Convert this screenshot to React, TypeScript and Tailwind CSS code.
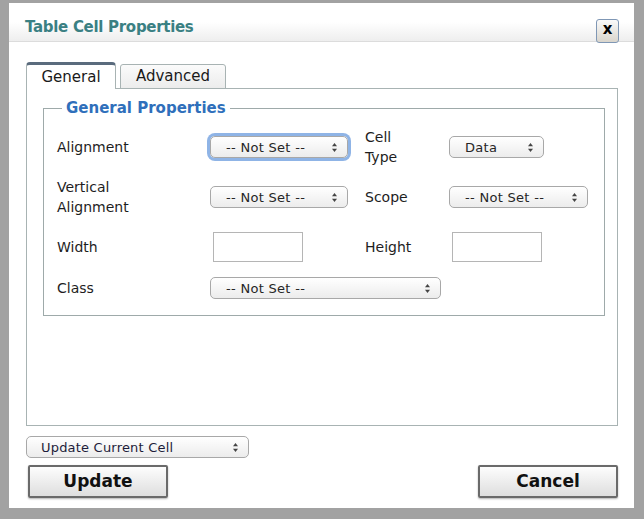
import React from "react";

const font = { fontFamily: '"DejaVu Sans", Verdana, sans-serif' };

function Arrows() {
  return (
    <svg width="7" height="11" viewBox="0 0 7 11" className="shrink-0">
      <path d="M3.5 1 L6 4.2 L1 4.2 Z" fill="#444" />
      <path d="M3.5 10 L6 6.8 L1 6.8 Z" fill="#444" />
    </svg>
  );
}

function FakeSelect({
  value,
  width,
  focused = false,
}: {
  value: string;
  width: string;
  focused?: boolean;
}) {
  return (
    <div
      className={`${width} h-[22px] flex items-center justify-between pl-[15px] pr-[9px] rounded-[5px] border border-[#a8a8a8] bg-gradient-to-b from-white to-[#ececec] text-[13px] tracking-[0.3px] text-[#262626] ${
        focused ? "ring-[3px] ring-[#8fb4e6] border-[#7c9cc8]" : ""
      }`}
    >
      <span className="leading-none whitespace-pre">{value}</span>
      <Arrows />
    </div>
  );
}

function TextBox() {
  return <div className="ml-[3px] w-[90px] h-[30px] border border-[#b5b5b5] bg-white" />;
}

function Label({ children }: { children: React.ReactNode }) {
  return <div className="text-[14px] leading-[20px] text-[#1e1e1e]">{children}</div>;
}

const notSet = "-- Not Set --";

export default function App() {
  return (
    <div
      className="w-[644px] h-[519px] bg-[#a2a2a2] pt-[3px] pl-[9px] pr-[10px] pb-[11px]"
      style={font}
    >
      <div className="h-full bg-white flex flex-col">
        {/* title bar */}
        <div className="h-[39px] shrink-0 flex items-center justify-between pl-[16px] pr-[15px] bg-gradient-to-b from-white via-white to-[#eeeeee] border-b border-[#dcdcdc]">
          <span className="text-[15px] font-bold text-[#3a8083] tracking-[-0.3px] mt-[11px]">
            Table Cell Properties
          </span>
          <button className="w-[23px] h-[24px] mt-[17px] flex items-center justify-center rounded-[3px] border border-[#7f97b5] bg-gradient-to-b from-[#fafafa] to-[#d9d5cc] text-[15px] font-bold text-black leading-none pb-[2px]">
            x
          </button>
        </div>

        <div className="flex-1 flex flex-col pt-[20px] pl-[17px] pr-[16px] pb-[10px]">
          {/* tabs */}
          <div className="flex items-end gap-[4px] h-[27px] -mb-px relative z-10">
            <div className="w-[90px] h-[27px] flex items-center justify-center rounded-t-[4px] border border-b-0 border-[#a8b3b3] border-t-[3px] border-t-[#5a6b7d] bg-white text-[15px] text-[#1a1a1a]">
              General
            </div>
            <div className="w-[106px] h-[25px] flex items-center justify-center rounded-t-[3px] border border-[#a8b3b3] bg-gradient-to-b from-[#fbfbfb] to-[#ececec] text-[15px] text-[#1a1a1a]">
              Advanced
            </div>
          </div>

          {/* panel */}
          <div className="flex-1 border border-[#a8b3b3] pt-[10px] pl-[16px] pr-[12px]">
            <fieldset className="border border-[#9eaaaa] pl-[13px] pr-[10px] pb-[16px] pt-[10px]">
              <legend className="ml-[5px] px-[4px] text-[15px] leading-[18px] font-bold text-[#2f6fbb]">
                General Properties
              </legend>
              <div className="grid grid-cols-[153px_155px_84px_1fr] grid-rows-[40px_40px_40px_22px] gap-y-[10px] items-center">
                <Label>Alignment</Label>
                <FakeSelect value={notSet} width="w-[138px]" focused />
                <Label>
                  Cell
                  <br />
                  Type
                </Label>
                <FakeSelect value="Data" width="w-[95px]" />

                <Label>
                  Vertical
                  <br />
                  Alignment
                </Label>
                <FakeSelect value={notSet} width="w-[138px]" />
                <Label>Scope</Label>
                <FakeSelect value={notSet} width="w-[139px]" />

                <Label>Width</Label>
                <TextBox />
                <Label>Height</Label>
                <TextBox />

                <Label>Class</Label>
                <div className="col-span-3">
                  <FakeSelect value={notSet} width="w-[231px]" />
                </div>
              </div>
            </fieldset>
          </div>

          {/* footer */}
          <div className="mt-[10px]">
            <div className="w-[223px] h-[22px] flex items-center justify-between pl-[14px] pr-[9px] rounded-[5px] border border-[#a8a8a8] bg-gradient-to-b from-white to-[#ececec] text-[13px] tracking-[0.2px] text-[#1d1d3a]">
              <span className="leading-none">Update Current Cell</span>
              <Arrows />
            </div>
          </div>
          <div className="mt-[7px] flex justify-between pl-[2px]">
            <button className="w-[140px] h-[33px] border-2 border-[#6a6a6a] rounded-[2px] bg-gradient-to-b from-[#fdfdfd] to-[#dedede] text-[17px] font-bold text-[#111] shadow-[0_1px_2px_rgba(0,0,0,0.3)]">
              Update
            </button>
            <button className="w-[140px] h-[33px] border-2 border-[#6a6a6a] rounded-[2px] bg-gradient-to-b from-[#fdfdfd] to-[#dedede] text-[17px] font-bold text-[#111] shadow-[0_1px_2px_rgba(0,0,0,0.3)]">
              Cancel
            </button>
          </div>
        </div>
      </div>
    </div>
  );
}
